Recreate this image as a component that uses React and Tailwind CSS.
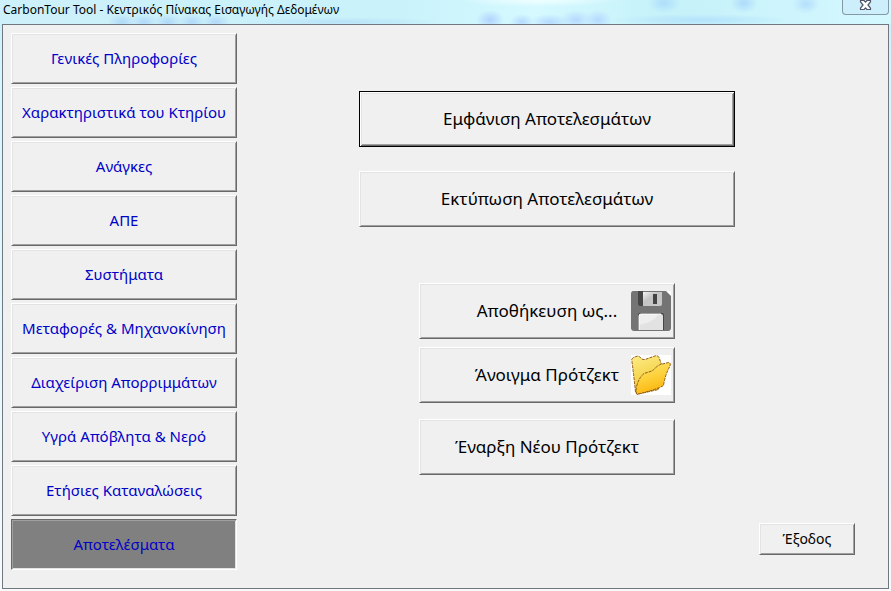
import { useState } from "react";
import clsx from "clsx";

const sections = [
    "Γενικές Πληροφορίες",
    "Χαρακτηριστικά του Κτηρίου",
    "Ανάγκες",
    "ΑΠΕ",
    "Συστήματα",
    "Μεταφορές & Μηχανοκίνηση",
    "Διαχείριση Απορριμμάτων",
    "Υγρά Απόβλητα & Νερό",
    "Ετήσιες Καταναλώσεις",
    "Αποτελέσματα",
];

const raised =
    "border border-t-white border-l-white border-r-[#696969] border-b-[#696969] shadow-[inset_1px_1px_0_#e3e3e3,inset_-1px_-1px_0_#a0a0a0]";
const sunken =
    "border border-t-[#696969] border-l-[#696969] border-r-white border-b-white shadow-[inset_1px_1px_0_#a0a0a0,inset_-1px_-1px_0_#e3e3e3]";

function CloseIcon() {
    return (
        <svg width="13" height="11" viewBox="0 0 13 11" aria-hidden="true">
            <path
                d="M1.500.5h3.500l1.500 1.700L8 .5h3.500v1.400L9 5l2.500 3.100v1.400H8L6.500 7.800 5 9.500H1.500V8.100L4 5 1.500 1.900z"
                fill="#fff"
                stroke="#50546a"
                strokeWidth="1.2"
                strokeLinejoin="round"
            />
        </svg>
    );
}

function FloppyIcon() {
    return (
        <svg width="40" height="40" viewBox="0 0 40 40" aria-hidden="true">
            <defs>
                <linearGradient id="shutter" x1="0" y1="0" x2="1" y2="1">
                    <stop offset="0" stopColor="#f4f4f4" />
                    <stop offset="0.4" stopColor="#c4c4c4" />
                    <stop offset="1" stopColor="#c9c9c9" />
                </linearGradient>
            </defs>
            <rect width="40" height="40" fill="#fff" />
            <path d="M2 0h33l5 5v32q0 3-3 3H3q-3 0-3-3V3q0-3 2-3z" fill="#747474" />
            <path d="M7 0h5v15H9q-2 0-2-2z" fill="#474747" />
            <path d="M12 1h19v12q0 2-2 2H12z" fill="url(#shutter)" />
            <rect x="22" y="3" width="4" height="10" fill="#444" />
            <path d="M7 39V24q0-2 2-2h22q2 0 2 2v15" fill="#444" />
            <path d="M8 39V25q0-2 2-2h20q2 0 2 2v14z" fill="#e2e2e2" />
            <path d="M8 34V25q0-2 2-2h17q-3 8-19 11z" fill="#eee" />
            <path d="M8 39V25q0-2 2-2h20" fill="none" stroke="#fff" />
        </svg>
    );
}

function FolderIcon() {
    return (
        <svg width="40" height="40" viewBox="0 0 40 40" aria-hidden="true">
            <defs>
                <linearGradient id="folderBack" x1="0" y1="0" x2="0.3" y2="1">
                    <stop offset="0" stopColor="#fdec86" />
                    <stop offset="1" stopColor="#f0c72e" />
                </linearGradient>
                <linearGradient id="folderFront" x1="0.2" y1="0" x2="0.5" y2="1">
                    <stop offset="0" stopColor="#fbe56d" />
                    <stop offset="0.5" stopColor="#fdd038" />
                    <stop offset="1" stopColor="#fbb40d" />
                </linearGradient>
            </defs>
            <rect width="40" height="40" fill="#fff" />
            <g strokeWidth="1" strokeLinejoin="round" stroke="#8f5a18" strokeDasharray="3 1">
                <path
                    d="M.7 4.500Q2 2 6 1.300q2-.4 3.500 1.200Q11 5 14 4.500L24.500.8Q27 .3 28 2.500l2.500 7-3 25L6 39.300 4.500 37Q3 22 .7 4.500z"
                    fill="url(#folderBack)"
                />
                <path
                    d="M6 39.300Q4.500 38 5.500 32 7.500 23 13 18.500l8.500-2.700q4.500-5 8-6.300L37.500 7.500Q40 7.500 39 11 34 20 32.500 30.500 26 34.500 6 39.300z"
                    fill="url(#folderFront)"
                />
            </g>
        </svg>
    );
}

function ActionButton({ children, icon, className }) {
    return (
        <button
            type="button"
            className={clsx(
                "relative flex h-14 shrink-0 items-center justify-center bg-[#f0f0f0] text-[17px] text-black",
                className,
            )}
        >
            {children}
            {icon && <span className="absolute right-[3px] top-[7px]">{icon}</span>}
        </button>
    );
}

export default function App() {
    const [active, setActive] = useState("Αποτελέσματα");

    return (
        <div className="flex min-h-screen flex-col bg-[linear-gradient(#c9eef8_0px,#d5f7ff_80px,#e3f7fd_50%,#fafafa_100%)] font-['Noto_Sans','Open_Sans',sans-serif]">
            <header className="flex h-6 items-start justify-between bg-[radial-gradient(ellipse_14px_8px_at_122px_22px,#b0d8f8,transparent),radial-gradient(ellipse_14px_8px_at_144px_22px,#b0d8f8,transparent),radial-gradient(ellipse_14px_8px_at_168px_22px,#b0d8f8,transparent),radial-gradient(ellipse_14px_8px_at_192px_22px,#b0d8f8,transparent),radial-gradient(ellipse_14px_8px_at_216px_22px,#b0d8f8,transparent),radial-gradient(ellipse_100px_5px_at_340px_22px,#b9e2f9,transparent),radial-gradient(ellipse_14px_10px_at_490px_20px,#b0d3ff,transparent),radial-gradient(ellipse_12px_8px_at_522px_22px,#b5d9ff,transparent),radial-gradient(ellipse_20px_8px_at_550px_22px,#b5d9ff,transparent),radial-gradient(ellipse_16px_10px_at_576px_20px,#b5d9ff,transparent),radial-gradient(ellipse_14px_10px_at_598px_20px,#b5d9ff,transparent),radial-gradient(ellipse_16px_10px_at_664px_3px,#aeddfb,transparent),radial-gradient(ellipse_14px_10px_at_744px_3px,#aedafc,transparent),radial-gradient(ellipse_14px_10px_at_806px_4px,#b4defc,transparent),radial-gradient(ellipse_90px_6px_at_700px_20px,#b4e2fb,transparent),radial-gradient(ellipse_80px_7px_at_540px_0px,#f0ffff,transparent),linear-gradient(90deg,#cdf0fa,#c9f2fa_45%,#d5f9ff_60%,#c5f1f9_75%,#d5f8ff)] pl-[3px] pr-[2px]">
                <h1 className="text-xs leading-5 text-black">CarbonTour Tool - Κεντρικός Πίνακας Εισαγωγής Δεδομένων</h1>
                <button
                    type="button"
                    aria-label="Κλείσιμο"
                    className="flex h-[15px] w-[47px] items-start justify-center rounded-b border border-t-0 border-[#8499a8] bg-[#cdeefb]"
                >
                    <CloseIcon />
                </button>
            </header>

            <div className="mx-[2px] mb-[2px] flex flex-1 gap-0.5 border border-[#6f7880] bg-[#f0f0f0] pl-2 pr-[33px] pt-2">
                <nav className="flex w-[226px] shrink-0 flex-col gap-[3px]">
                    {sections.map((name) => (
                        <button
                            key={name}
                            type="button"
                            onClick={() => setActive(name)}
                            className={clsx(
                                "h-[51px] whitespace-nowrap text-[15px] text-[#0000c8]",
                                name === active ? sunken : raised,
                                name === active ? "bg-[#808080]" : "bg-[#f0f0f0]",
                            )}
                        >
                            {name}
                        </button>
                    ))}
                </nav>

                <main className="flex flex-1 flex-col items-center pb-[33px] pt-[58px]">
                    <div className="flex w-full max-w-[376px] flex-col gap-6">
                        <ActionButton className="border border-black shadow-[inset_1px_1px_0_#fff,inset_-1px_-1px_0_#696969,inset_2px_2px_0_#e3e3e3,inset_-2px_-2px_0_#a0a0a0]">
                            Εμφάνιση Αποτελεσμάτων
                        </ActionButton>
                        <ActionButton className={raised}>Εκτύπωση Αποτελεσμάτων</ActionButton>
                    </div>
                    <div className="mt-14 flex w-full max-w-[256px] flex-col">
                        <ActionButton className={raised} icon={<FloppyIcon />}>
                            Αποθήκευση ως...
                        </ActionButton>
                        <ActionButton className={clsx("mt-2", raised)} icon={<FolderIcon />}>
                            Άνοιγμα Πρότζεκτ
                        </ActionButton>
                        <ActionButton className={clsx("mt-4", raised)}>Έναρξη Νέου Πρότζεκτ</ActionButton>
                    </div>
                    <button
                        type="button"
                        className={clsx("mt-auto h-8 w-24 self-end bg-[#f0f0f0] text-sm text-black", raised)}
                    >
                        Έξοδος
                    </button>
                </main>
            </div>
        </div>
    );
}
